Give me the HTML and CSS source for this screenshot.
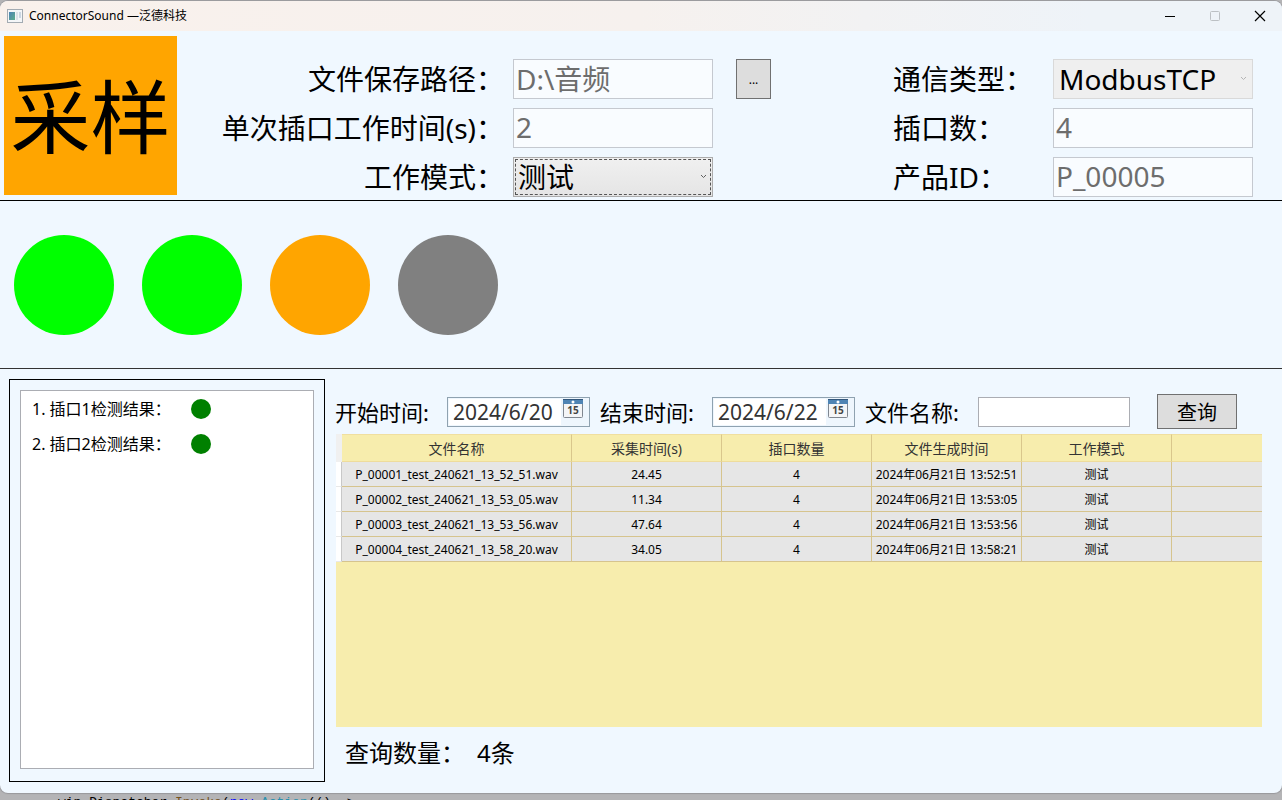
FILE: index.html
```html
<!DOCTYPE html>
<html lang="zh-CN">

<head>
    <meta charset="UTF-8">
    <meta name="viewport" content="width=device-width, initial-scale=1.0">
    <title>ConnectorSound —泛德科技</title>
    <link rel="stylesheet" href="styles.css">
</head>

<body>
    <div class="window">
        <!-- 标题栏 -->
        <div class="titlebar">
            <svg class="app-icon" width="16" height="14" viewBox="0 0 16 14">
                <defs>
                    <linearGradient id="pane" x1="0" y1="0" x2="1" y2="1">
                        <stop offset="0" stop-color="#4d83b5" />
                        <stop offset="1" stop-color="#5fae8c" />
                    </linearGradient>
                </defs>
                <rect x="0.5" y="0.5" width="15" height="13" fill="#f4f6f8" stroke="#a3abb2" />
                <rect x="2" y="3" width="6" height="8" fill="url(#pane)" />
                <rect x="9" y="3" width="2" height="8" fill="#dde2e8" />
                <rect x="12" y="3" width="2" height="6" fill="#cbd6e2" />
            </svg>
            <span class="title">ConnectorSound —泛德科技</span>
            <div class="win-btns">
                <button aria-label="最小化"><svg width="12" height="12"><path d="M1 6.5H11" stroke="#000" /></svg></button>
                <button aria-label="最大化" disabled><svg width="12" height="12"><rect x="1.5" y="1.5" width="9" height="9" rx="1" fill="none" stroke="#bcc0c4" /></svg></button>
                <button aria-label="关闭"><svg width="12" height="12"><path d="M1 1L11 11M11 1L1 11" stroke="#000" stroke-width="1.2" /></svg></button>
            </div>
        </div>

        <!-- 参数设置 -->
        <div class="header">
            <div class="state">采样</div>
            <div class="settings">
                <label for="path">文件保存路径：</label>
                <input id="path" type="text" value="D:\音频" disabled>
                <button class="browse">...</button>
                <label for="worktime">单次插口工作时间(s)：</label>
                <input id="worktime" type="text" value="2" disabled>
                <label for="mode">工作模式：</label>
                <div class="combo focus">
                    <select id="mode">
                        <option>测试</option>
                    </select>
                    <svg width="7" height="5"><path d="M1 1L3.5 3.5L6 1" fill="none" stroke="#606060" /></svg>
                </div>
            </div>
            <div class="settings device">
                <label for="comm">通信类型：</label>
                <div class="combo">
                    <select id="comm" disabled>
                        <option>ModbusTCP</option>
                    </select>
                    <svg width="7" height="5"><path d="M1 1L3.5 3.5L6 1" fill="none" stroke="#b5b5b5" /></svg>
                </div>
                <label for="ports">插口数：</label>
                <input id="ports" type="text" value="4" disabled>
                <label for="product">产品ID：</label>
                <input id="product" type="text" value="P_00005" disabled>
            </div>
        </div>

        <!-- 插口状态灯 -->
        <div class="lamps">
            <span class="lamp pass"></span>
            <span class="lamp pass"></span>
            <span class="lamp busy"></span>
            <span class="lamp idle"></span>
        </div>

        <div class="main">
            <div class="results">
                <ul>
                    <li><span>1. 插口1检测结果：</span><i class="dot"></i></li>
                    <li><span>2. 插口2检测结果：</span><i class="dot"></i></li>
                </ul>
            </div>

            <div class="query">
                <div class="filter">
                    <label for="start">开始时间:</label>
                    <div class="date">
                        <input id="start" type="text" value="2024/6/20">
                        <button aria-label="选择开始日期">
                            <svg width="20" height="19" viewBox="0 0 20 19">
                                <rect x="0.5" y="0.5" width="19" height="18" rx="1" fill="#f4f5f7" stroke="#808790" />
                                <rect x="0" y="0" width="20" height="5" fill="#4f84b4" />
                                <rect x="0" y="0" width="20" height="1" fill="#33577b" />
                                <circle cx="10" cy="3" r="1.5" fill="#fff" />
                                <text x="10" y="15" class="cal-day">15</text>
                            </svg>
                        </button>
                    </div>
                    <label for="end">结束时间:</label>
                    <div class="date">
                        <input id="end" type="text" value="2024/6/22">
                        <button aria-label="选择结束日期">
                            <svg width="20" height="19" viewBox="0 0 20 19">
                                <rect x="0.5" y="0.5" width="19" height="18" rx="1" fill="#f4f5f7" stroke="#808790" />
                                <rect x="0" y="0" width="20" height="5" fill="#4f84b4" />
                                <rect x="0" y="0" width="20" height="1" fill="#33577b" />
                                <circle cx="10" cy="3" r="1.5" fill="#fff" />
                                <text x="10" y="15" class="cal-day">15</text>
                            </svg>
                        </button>
                    </div>
                    <label for="filename">文件名称:</label>
                    <input id="filename" class="filename" type="text">
                    <button class="search">查询</button>
                </div>

                <div class="grid">
                    <table>
                        <colgroup>
                            <col class="c-row">
                            <col class="c-name">
                            <col class="c-item">
                            <col class="c-item">
                            <col class="c-item">
                            <col class="c-item">
                            <col>
                        </colgroup>
                        <thead>
                            <tr>
                                <th></th>
                                <th>文件名称</th>
                                <th>采集时间(s)</th>
                                <th>插口数量</th>
                                <th>文件生成时间</th>
                                <th>工作模式</th>
                                <th></th>
                            </tr>
                        </thead>
                        <tbody>
                            <tr>
                                <td></td>
                                <td>P_00001_test_240621_13_52_51.wav</td>
                                <td>24.45</td>
                                <td>4</td>
                                <td>2024年06月21日 13:52:51</td>
                                <td>测试</td>
                                <td></td>
                            </tr>
                            <tr>
                                <td></td>
                                <td>P_00002_test_240621_13_53_05.wav</td>
                                <td>11.34</td>
                                <td>4</td>
                                <td>2024年06月21日 13:53:05</td>
                                <td>测试</td>
                                <td></td>
                            </tr>
                            <tr>
                                <td></td>
                                <td>P_00003_test_240621_13_53_56.wav</td>
                                <td>47.64</td>
                                <td>4</td>
                                <td>2024年06月21日 13:53:56</td>
                                <td>测试</td>
                                <td></td>
                            </tr>
                            <tr>
                                <td></td>
                                <td>P_00004_test_240621_13_58_20.wav</td>
                                <td>34.05</td>
                                <td>4</td>
                                <td>2024年06月21日 13:58:21</td>
                                <td>测试</td>
                                <td></td>
                            </tr>
                        </tbody>
                    </table>
                </div>

                <div class="count"><span>查询数量：</span><span>4条</span></div>
            </div>
        </div>
    </div>
    <!-- 窗口后面的编辑器 -->
    <div class="behind"><code>win.Dispatcher.<span class="fn">Invoke</span>(<span class="kw">new</span> <span class="type">Action</span>(() =&gt;</code></div>
</body>

</html>
```
FILE: styles.css
```css
* {
    margin: 0;
    padding: 0;
    box-sizing: border-box;
}

body {
    display: flex;
    flex-direction: column;
    height: 100vh;
    overflow: hidden;
    background: #b4b4b6;
    font-family: "Noto Sans", "Noto Sans CJK SC", sans-serif;
    font-size: 12px;
    color: #000;
}

input,
select,
button {
    font-family: inherit;
    border-radius: 0;
    outline: none;
}

.window {
    flex: 1;
    display: flex;
    flex-direction: column;
    min-height: 0;
    margin-top: 1px;
    border-radius: 8px;
    background: #f0f8ff;
    overflow: hidden;
    box-shadow: 0 0 1px 1px #98989c;
}

/* 标题栏 */
.titlebar {
    display: flex;
    align-items: center;
    height: 30px;
    padding-left: 7px;
    background: linear-gradient(90deg, #f9f1ec 0%, #f6f1ee 50%, #eef3f8 85%);
}

.title {
    margin-left: 6px;
    line-height: 16px;
    font-size: 12px;
}

.win-btns {
    display: flex;
    margin-left: auto;
}

.win-btns button {
    display: flex;
    align-items: center;
    justify-content: center;
    width: 45px;
    height: 30px;
    border: none;
    background: none;
}

/* 参数设置 */
.header {
    display: flex;
    padding: 5px 29px 3px 4px;
    border-bottom: 1px solid #000;
}

.state {
    display: flex;
    align-items: center;
    justify-content: center;
    width: 173px;
    height: 159px;
    background: #ffa500;
    font-size: 80px;
    line-height: 80px;
}

.settings {
    display: grid;
    grid-template-columns: 327px 200px 58px;
    grid-auto-rows: 40px;
    column-gap: 9px;
    row-gap: 9px;
    padding-top: 23px;
    font-size: 28px;
    line-height: 40px;
}

.settings label {
    grid-column: 1;
    text-align: right;
    white-space: nowrap;
}

.settings input {
    width: 200px;
    height: 40px;
    padding: 0 2px 3px;
    border: 1px solid #c5c9d0;
    background: #f9fcff;
    color: #6d6d6d;
    font-size: 28px;
}

.browse {
    width: 35px;
    height: 40px;
    margin-left: 14px;
    border: 1px solid #707070;
    background: #ddd;
    font-size: 12px;
}

.device {
    grid-template-columns: 151px 200px;
    margin-left: auto;
}

.device label {
    text-align: left;
}

.combo {
    position: relative;
    height: 40px;
}

.combo select {
    width: 100%;
    height: 100%;
    padding: 0 5px;
    appearance: none;
    border: 1px solid #d9d9d9;
    background: #efefef;
    color: #000;
    font-size: 28px;
    opacity: 1;
}

.combo svg {
    position: absolute;
    right: 6px;
    top: 17px;
}

.focus select {
    padding: 0 4px;
    border-color: #acacac;
    background: linear-gradient(#f0f0f0, #e5e5e5);
    outline: 1px dashed #555;
    outline-offset: -3px;
}

/* 状态灯 */
.lamps {
    display: flex;
    gap: 28px;
    padding: 34px 14px 33px;
    border-bottom: 1px solid #333;
}

.lamp {
    width: 100px;
    height: 100px;
    border-radius: 50%;
}

.pass {
    background: #0f0;
}

.busy {
    background: #ffa500;
}

.idle {
    background: #808080;
}

.main {
    flex: 1;
    display: flex;
    gap: 10px;
    min-height: 0;
    padding: 10px 20px 11px 9px;
}

/* 检测结果 */
.results {
    display: flex;
    width: 316px;
    padding: 10px 10px 12px;
    border: 1px solid #000;
}

.results ul {
    flex: 1;
    padding: 0 11px;
    border: 1px solid #abadb3;
    background: #fff;
    list-style: none;
}

.results li {
    display: flex;
    align-items: center;
    height: 35px;
    font-size: 16px;
    line-height: 20px;
}

.results span {
    width: 159px;
    white-space: nowrap;
}

.dot {
    width: 20px;
    height: 20px;
    border-radius: 50%;
    background: #008000;
}

/* 查询 */
.query {
    flex: 1;
    display: flex;
    flex-direction: column;
    min-width: 0;
}

.filter {
    display: flex;
    align-items: center;
    height: 35px;
    margin-top: 15px;
    font-size: 22px;
}

.filter label {
    flex: none;
    width: 112px;
    line-height: 32px;
    white-space: nowrap;
}

.date {
    display: flex;
    width: 143px;
    height: 30px;
    margin-right: 10px;
    padding: 1px;
    border: 1px solid #8fa2b0;
    background: #eef6fd;
}

.date input {
    width: 112px;
    padding: 0 4px;
    border: none;
    background: #fff;
    color: #333;
    font-size: 21px;
}

.date button {
    width: 24px;
    height: 22px;
    border: none;
    background: none;
}

.cal-day {
    font-size: 10px;
    font-weight: bold;
    text-anchor: middle;
    fill: #444;
}

.filename {
    width: 152px;
    height: 30px;
    margin-left: 1px;
    padding: 0 4px;
    border: 1px solid #abadb3;
    background: #fff;
    font-size: 20px;
}

.search {
    width: 80px;
    height: 35px;
    margin-left: 27px;
    border: 1px solid #707070;
    background: #ddd;
    font-size: 20px;
}

.grid {
    flex: 1;
    min-height: 0;
    margin: 5px 0 0 1px;
    background: #f7edad;
}

table {
    width: 100%;
    table-layout: fixed;
    border-collapse: separate;
    border-spacing: 0;
}

.c-row {
    width: 6px;
}

.c-name {
    width: 230px;
}

.c-item {
    width: 150px;
}

th {
    height: 28px;
    padding-top: 2px;
    border-top: 1px solid #f0dfa0;
    border-right: 1px solid #d9c78c;
    border-bottom: 1px solid #eedc9c;
    color: #333;
    font-size: 14px;
    font-weight: normal;
    line-height: 20px;
}

td {
    height: 25px;
    padding-top: 2px;
    border-right: 1px solid #d6c48e;
    border-bottom: 1px solid #d6c48e;
    background: #e6e6e6;
    font-size: 12px;
    line-height: 18px;
    text-align: center;
    white-space: nowrap;
}

th:first-child {
    border: none;
    background: #f0f0f0;
}

td:first-child {
    border-right-color: #c8c8c8;
    border-bottom-color: #e8e8e8;
    background: #fff;
}

th:last-child,
td:last-child {
    border-right: none;
}

.count {
    display: flex;
    gap: 12px;
    height: 55px;
    padding-left: 10px;
    font-size: 24px;
    line-height: 52px;
}

/* 背景里的代码 */
.behind {
    height: 7px;
    padding-left: 58px;
    overflow: hidden;
    font-size: 13px;
    line-height: 16px;
}

.behind code {
    font-family: "Liberation Mono", monospace;
    font-size: 13px;
}

.fn {
    color: #74531f;
}

.kw {
    color: #00f;
}

.type {
    color: #2b91af;
}
```
